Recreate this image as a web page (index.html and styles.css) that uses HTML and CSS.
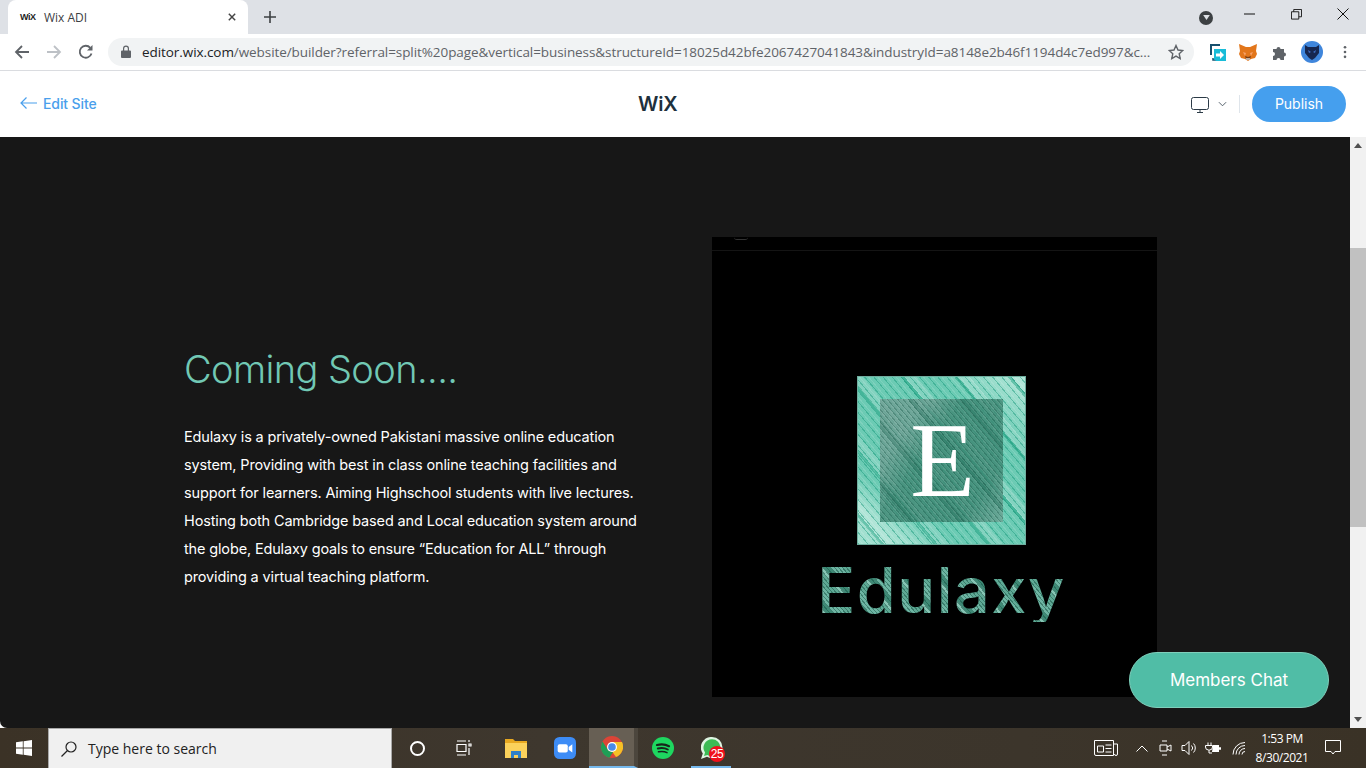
FILE: index.html
```html
<!DOCTYPE html>
<html lang="en">
<head>
<meta charset="utf-8">
<title>Wix ADI</title>
<link rel="stylesheet" href="styles.css">
</head>
<body>
<div class="tabstrip">
  <div class="tab">
    <span class="favicon">WiX</span>
    <span class="tab-title">Wix ADI</span>
    <svg class="tab-close" viewBox="0 0 10 10"><path d="M1 1l8 8M9 1l-8 8"/></svg>
  </div>
  <svg class="new-tab" viewBox="0 0 12 12"><path d="M6 0v12M0 6h12"/></svg>
  <div class="strip-right">
    <span class="profile-dot"><svg viewBox="0 0 8 6"><path d="M0 0h8L4 6z"/></svg></span>
    <svg class="win min" viewBox="0 0 12 12"><path d="M0 6h11"/></svg>
    <svg class="win restore" viewBox="0 0 12 12"><path d="M.5 3h8v8h-8zM3 3V.5h8.500v8H8.500"/></svg>
    <svg class="win close" viewBox="0 0 12 12"><path d="M.5.500l11 11M11.500.500l-11 11"/></svg>
  </div>
</div>
<div class="toolbar">
  <svg class="nav" viewBox="0 0 16 16"><path d="M15 8H2M8 2L2 8l6 6"/></svg>
  <svg class="nav off" viewBox="0 0 16 16"><path d="M1 8h13M8 2l6 6-6 6"/></svg>
  <svg class="nav reload" viewBox="0 0 16 16"><path d="M13.500 9.500A6 6 0 1 1 12.300 3.800"/><path class="solid" d="M14.500 1v5.500H9z"/></svg>
  <div class="omnibox">
    <svg class="lock" viewBox="0 0 10 13"><path d="M1 5.500h8a1 1 0 0 1 1 1V12a1 1 0 0 1-1 1H1a1 1 0 0 1-1-1V6.500a1 1 0 0 1 1-1zM2 5.500V3.500a3 3 0 0 1 6 0v2H6.800v-2a1.800 1.800 0 0 0-3.600 0v2z"/></svg>
    <span class="url"><b>editor.wix.com</b>/website/builder?referral=split%20page&amp;vertical=business&amp;structureId=18025d42bfe2067427041843&amp;industryId=a8148e2b46f1194d4c7ed997&amp;c...</span>
    <svg class="star" viewBox="0 0 16 16"><path d="M8 1.500l2 4.500 4.800.500-3.600 3.200 1 4.800L8 12.100l-4.200 2.400 1-4.800L1.200 6.500 6 6z"/></svg>
  </div>
  <div class="extensions">
    <svg class="ext ext-share" viewBox="0 0 18 18"><path fill="none" stroke="#17506e" stroke-width="2" d="M12 2H3v10"/><path fill="none" stroke="#17506e" stroke-width="1.500" d="M5 15v2h4"/><path fill="#19bcd8" d="M6 6h12v12H8l-2-2z"/><path fill="#fff" d="M8 10.500h4V8l4 4-4 4v-2.500H8z"/></svg>
    <svg class="ext ext-fox" viewBox="0 0 18 18"><path fill="#e2761b" d="M0 1l7 3h4l7-3-1 7 1 3-2 4-4 1-3 2-3-2-4-1-2-4 1-3z"/><path fill="#f6a26b" d="M4 9l3 1-1 3zM14 9l-3 1 1 3z"/><path fill="#763d16" d="M6 13l3 1 3-1-1 3H7z"/><path fill="#c0ad9e" d="M7 15h4v2H7z"/></svg>
    <svg class="ext ext-puzzle" viewBox="0 0 16 16"><path fill="#5f6368" d="M1 5h3.500a2 2 0 1 1 4 0H12v3.500a2 2 0 1 1 0 4V16H8.500a2 2 0 1 0-4 0H1v-4a2 2 0 1 0 0-4z"/></svg>
    <span class="avatar"><svg viewBox="0 0 14 16"><path fill="#16264f" d="M0 1l3 2h8l3-2v8l-4 5-3 2-3-2-4-5z"/><path fill="#3f6fc4" d="M3 6l3 2-2 1zM11 6L8 8l2 1z"/></svg></span>
    <svg class="kebab" viewBox="0 0 4 16"><circle cx="2" cy="2.500" r="1.500"/><circle cx="2" cy="8" r="1.500"/><circle cx="2" cy="13.500" r="1.500"/></svg>
  </div>
</div>
<header class="wixbar">
  <a class="edit-site"><svg viewBox="0 0 17 12"><path d="M17 6H1M6.500.500L1 6l5.500 5.500"/></svg>Edit Site</a>
  <div class="wix-logo">WiX</div>
  <div class="wix-actions">
    <svg class="monitor" viewBox="0 0 18 16"><rect x=".5" y=".5" width="17" height="12" rx="2"/><path d="M6 15.500h6M9 13v2"/></svg>
    <svg class="chev" viewBox="0 0 10 6"><path d="M1 1l4 4 4-4"/></svg>
    <span class="vsep"></span>
    <button class="publish">Publish</button>
  </div>
</header>
<main class="viewport">
  <div class="site">
    <section class="copy">
      <h1>Coming Soon....</h1>
      <p>Edulaxy is a privately-owned Pakistani massive online education<br>system, Providing with best in class online teaching facilities and<br>support for learners. Aiming Highschool students with live lectures.<br>Hosting both Cambridge based and Local education system around<br>the globe, Edulaxy goals to ensure “Education for ALL” through<br>providing a virtual teaching platform.</p>
    </section>
    <figure class="art">
      <div class="art-mark"></div>
      <div class="art-line"></div>
      <div class="logo-square"><div class="logo-inner"><span class="logo-e">E</span></div></div>
      <div class="logo-word">Edulaxy</div>
    </figure>
  </div>
  <div class="scrollbar">
    <svg class="sb-arrow" viewBox="0 0 8 5"><path d="M4 0l4 5H0z"/></svg>
    <div class="sb-track"><div class="sb-thumb"></div></div>
    <svg class="sb-arrow" viewBox="0 0 8 5"><path d="M0 0h8L4 5z"/></svg>
  </div>
  <button class="chat">Members Chat</button>
</main>
<footer class="taskbar">
  <div class="start"><svg viewBox="0 0 16 16"><path d="M0 2.300l6.800-1v6.300H0zM7.600 1.200L16 0v7.600H7.600zM0 8.400h6.800v6.300l-6.800-1zM7.600 8.400H16V16l-8.400-1.200z"/></svg></div>
  <div class="searchbox">
    <svg viewBox="0 0 16 16"><circle cx="10" cy="6" r="5"/><path d="M6.500 9.500L.5 15.500"/></svg>
    <span>Type here to search</span>
  </div>
  <div class="tray-apps">
    <span class="tb-item"><span class="cortana"></span></span>
    <span class="tb-item"><svg class="taskview" viewBox="0 0 16 16"><path d="M1 1h9M1 15h9M1 4.500h9v7H1zM13 4h2v2h-2zM13 8v7M13 0v2"/></svg></span>
    <span class="tb-item"><svg viewBox="0 0 22 20"><path fill="#e8a820" d="M0 1h8l2 2h12v3H0z"/><path fill="#fbd15b" d="M0 5h22v15H0z"/><path fill="#2f80c8" d="M6 20v-7h10v7h-3v-3H9v3z"/></svg></span>
    <span class="tb-item"><svg viewBox="0 0 24 24"><rect width="24" height="24" rx="6" fill="#3d8cf6"/><rect x="4" y="8" width="11" height="9" rx="2" fill="#fff"/><path fill="#fff" d="M16 11l4-3v9l-4-3z"/></svg></span>
    <span class="tb-item active"><svg viewBox="0 0 22 22"><circle cx="11" cy="11" r="11" fill="#dc4437"/><path fill="#f6c026" d="M11 6h10a11 11 0 0 1-6 15l-5-7z"/><path fill="#1e9e56" d="M1.500 5.500L7 14l5 2-3.500 5.800A11 11 0 0 1 1.500 5.500z"/><circle cx="11" cy="11" r="5" fill="#fff"/><circle cx="11" cy="11" r="3.800" fill="#4a8ae8"/></svg></span>
    <span class="tb-item"><svg viewBox="0 0 22 22"><circle cx="11" cy="11" r="11" fill="#1ed760"/><path fill="none" stroke="#17251b" stroke-linecap="round" stroke-width="2.200" d="M5 8c4-1 8-1 12 1.200"/><path fill="none" stroke="#17251b" stroke-linecap="round" stroke-width="1.900" d="M5.800 11.500c3.500-.8 7-.6 10 1"/><path fill="none" stroke="#17251b" stroke-linecap="round" stroke-width="1.600" d="M6.500 14.800c3-.6 6-.5 8.500.8"/></svg></span>
    <span class="tb-item running"><svg viewBox="0 0 22 22"><path fill="#dff5e3" d="M11 0a10.500 10.500 0 0 1 0 21c-2 0-3.500-.4-5-1.300L0 22l1.800-5.500A10.500 10.500 0 0 1 11 0z"/><path fill="#3dbb55" d="M11 2.200a8.500 8.500 0 0 1 0 17c-1.800 0-3.200-.5-4.500-1.300l-3.500 1 1-3.400A8.500 8.500 0 0 1 11 2.200z"/></svg><span class="badge">25</span></span>
  </div>
  <div class="tray">
    <svg class="news" viewBox="0 0 24 16"><path d="M.5.500h19v15H2a1.500 1.500 0 0 1-1.500-1.500zM19.500 4h4v10a1.500 1.500 0 0 1-3 0M3.500 6h6v6h-6zM11.500 5h6M11.500 8.500h6M11.500 12h6"/></svg>
    <svg class="t-ic caret" viewBox="0 0 12 7"><path d="M.5 6.500L6 1l5.500 5.500"/></svg>
    <svg class="t-ic cam" viewBox="0 0 14 16"><path d="M3 1h5M3 15h5M1 5h7v6H1zM8 7l4-2v6l-4-2"/></svg>
    <svg class="t-ic vol" viewBox="0 0 16 16"><path d="M1 5.500h3L8 1.500v13l-4-4H1zM10.500 5.500a3.500 3.500 0 0 1 0 5M12.500 3.500a6.500 6.500 0 0 1 0 9"/></svg>
    <svg class="t-ic batt" viewBox="0 0 16 12"><path d="M3 .5v3M6 .5v3M.5 3.500h7V5a3 3 0 0 1-3 3H3.500A3 3 0 0 1 .5 5zM4 8v3h3"/><path class="fill" d="M8 3h6v7H7z"/><path d="M14.500 5.500h1v2h-1z"/></svg>
    <svg class="t-ic wifi" viewBox="0 0 16 14"><path d="M1 13.500A12 12 0 0 1 13 1.500M4 13.500a9 9 0 0 1 9-9M7 13.500a6 6 0 0 1 6-6M10 13.500a3 3 0 0 1 3-3"/></svg>
    <div class="clock"><span>1:53 PM</span><span>8/30/2021</span></div>
    <svg class="notify" viewBox="0 0 16 16"><path d="M.5.500h15v11H10L8 14l-2-2.500H.5z"/></svg>
  </div>
</footer>
</body>
</html>
```
FILE: styles.css
```css
* { box-sizing: border-box; }
html, body { margin: 0; height: 100%; overflow: hidden; }
body { display: flex; flex-direction: column; height: 768px; background: #fff; font-family: "Open Sans", "Liberation Sans", sans-serif; }

/* browser tab strip */
.tabstrip { height: 34px; flex: none; background: #dee1e6; display: flex; align-items: flex-end; padding-left: 8px; }
.tab { width: 240px; height: 34px; background: #fff; border-radius: 8px 8px 0 0; display: flex; align-items: center; padding: 0 12px 0 12px; }
.favicon { width: 16px; font: 700 9px "Liberation Sans", sans-serif; color: #222; letter-spacing: -.4px; margin-right: 8px; }
.tab-title { flex: 1; font-size: 12px; color: #3c4043; }
.tab-close { width: 8px; height: 8px; fill: none; stroke: #444; stroke-width: 1.800; }
.new-tab { width: 12px; height: 12px; margin: 0 0 11px 16px; fill: none; stroke: #3c4043; stroke-width: 1.600; }
.strip-right { margin-left: auto; height: 34px; display: flex; align-items: center; padding-right: 17px; }
.profile-dot { width: 14px; height: 14px; border-radius: 50%; background: #3c4043; display: flex; align-items: center; justify-content: center; margin-right: 31px; margin-top: 1px; }
.profile-dot svg { width: 7px; height: 5px; fill: #dee1e6; }
.win { width: 12px; height: 12px; fill: none; stroke: #111; stroke-width: 1; margin-top: -6px; }
.min { margin-right: 35px; }
.restore { width: 11px; height: 11px; margin-right: 35px; }

/* toolbar */
.toolbar { height: 37px; flex: none; background: #fff; border-bottom: 1px solid #dadce0; display: flex; align-items: center; padding: 0 0 1px 14px; }
.nav { width: 16px; height: 16px; fill: none; stroke: #5f6368; stroke-width: 1.800; margin-right: 16px; }
.nav.off { stroke: #bdc1c6; }
.nav.reload { margin-right: 14px; }
.solid { fill: #5f6368; stroke: none; }
.omnibox { width: 1086px; height: 28px; background: #f1f3f4; border-radius: 14px; display: flex; align-items: center; padding-left: 13px; }
.lock { width: 10px; height: 13px; fill: #5f6368; margin-right: 11px; flex: none; }
.url { font-size: 13.500px; letter-spacing: -.072px; color: #5f6368; white-space: nowrap; }
.url b { font-weight: 400; color: #202124; }
.star { width: 16px; height: 16px; fill: none; stroke: #5f6368; stroke-width: 1.400; margin-left: auto; margin-right: 10px; flex: none; }
.extensions { display: flex; align-items: center; margin-left: 14px; }
.ext { width: 18px; height: 18px; flex: none; }
.ext-share { margin-right: 13px; }
.ext-fox { margin-right: 15px; }
.ext-puzzle { width: 16px; height: 16px; margin-right: 13px; }
.avatar { width: 22px; height: 22px; border-radius: 50%; background: #3f86dc; display: flex; align-items: center; justify-content: center; }
.avatar svg { width: 14px; height: 16px; }
.kebab { width: 4px; height: 14px; fill: #5f6368; margin-left: 20px; }

/* wix preview bar */
.wixbar { height: 66px; flex: none; background: #fff; display: flex; align-items: center; justify-content: space-between; position: relative; padding: 0 20px; }
.edit-site { display: flex; align-items: center; color: #4a9fec; font: 500 14px "Inter", "Liberation Sans", sans-serif; letter-spacing: -.1px; margin-bottom: 2px; }
.edit-site svg { width: 17px; height: 12px; fill: none; stroke: #4a9fec; stroke-width: 1.200; margin-right: 6px; }
.wix-logo { position: absolute; left: 638px; top: 21px; font: 600 20px "Inter", "Liberation Sans", sans-serif; color: #20303c; letter-spacing: -.2px; }
.wix-actions { display: flex; align-items: center; }
.monitor { width: 18px; height: 16px; fill: none; stroke: #2b3a46; stroke-width: 1; margin-top: 2px; }
.chev { width: 9px; height: 6px; fill: none; stroke: #44525d; stroke-width: 1; margin-left: 9px; }
.vsep { width: 1px; height: 18px; background: #dfe5eb; margin: 0 12px 0 12px; }
.publish { width: 94px; height: 36px; border: 0; border-radius: 18px; background: #459fee; color: #fff; font: 400 14px "Inter", "Liberation Sans", sans-serif; padding: 0 0 2px; }

/* page */
.viewport { flex: 1; position: relative; display: flex; background: #fff; min-height: 0; }
.site { flex: 1; background: #171717; border-bottom-left-radius: 7px; display: grid; grid-template-columns: 528px 445px; padding: 100px 0 0 184px; align-content: start; }
.copy { padding-top: 108px; }
.copy h1 { margin: 0; font: 300 38px/48px "Inter", sans-serif; color: #71c8b4; letter-spacing: -.6px; }
.copy p { margin: 30px 0 0; font: 400 14.500px/28px "Inter", sans-serif; color: #fff; white-space: nowrap; letter-spacing: -.15px; }
.art { margin: 0; height: 460px; background: #000; display: flex; flex-direction: column; align-items: center; position: relative; padding: 139px 0 0 14px; }
.art-line { position: absolute; left: 0; right: 0; top: 13px; height: 1px; background: #141414; }
.art-mark { position: absolute; left: 22px; top: 0; width: 14px; height: 3px; border-bottom: 1px solid #333; border-radius: 0 0 7px 7px; }
.logo-square { width: 169px; height: 169px; flex: none; display: flex; align-items: center; justify-content: center; border: 1px solid #6fae9f;
  background:
    repeating-linear-gradient(50deg, rgba(20,150,120,.45) 0 1px, transparent 1px 3px, rgba(255,255,255,.12) 3px 4px, transparent 4px 7px),
    repeating-linear-gradient(50deg, transparent 0 17px, rgba(10,150,115,.4) 17px 20px, rgba(255,255,255,.16) 20px 29px, transparent 29px 41px),
    linear-gradient(40deg, #a2e0d0 0 14%, #6ccbb4 24% 76%, #a2e0d0 92%); }
.logo-inner { width: 123px; height: 123px; display: flex; align-items: center; justify-content: center;
  background:
    repeating-linear-gradient(50deg, rgba(20,80,65,.3) 0 1px, transparent 1px 3px, rgba(255,255,255,.08) 3px 4px),
    repeating-linear-gradient(50deg, transparent 0 22px, rgba(15,90,70,.25) 22px 27px, transparent 27px 39px),
    linear-gradient(125deg, rgba(110,160,148,.85) 0 22%, rgba(62,135,115,.82) 40% 80%, rgba(110,165,150,.85) 100%); }
.logo-e { font: 400 106px/1 "Liberation Serif", serif; color: #fff; margin: 0 0 0 2px; }
.logo-word { font: 500 63px/1 "Inter", sans-serif; letter-spacing: 1.500px; margin: 14px 0 0; color: transparent;
  background:
    repeating-linear-gradient(50deg, rgba(20,80,65,.5) 0 1px, transparent 1px 3px),
    repeating-linear-gradient(50deg, #5fa995 0 9px, #86c5b4 9px 13px, #3f8a76 13px 18px, #6eb5a3 18px 27px);
  -webkit-background-clip: text; background-clip: text; }
.scrollbar { width: 16px; flex: none; background: #f1f1f1; display: flex; flex-direction: column; align-items: center; }
.sb-arrow { width: 8px; height: 5px; flex: none; fill: #505050; margin: 6px 0; }
.sb-track { flex: 1; width: 100%; padding-top: 94px; }
.sb-thumb { height: 279px; background: #c1c1c1; }
.chat { position: absolute; left: 1129px; top: 515px; width: 200px; height: 56px; border-radius: 28px; border: 1px solid #7fcfbb; background: #50bda6; color: #fff; font: 400 17px "Inter", sans-serif; letter-spacing: 0; padding: 0; }

/* taskbar */
.taskbar { height: 40px; flex: none; display: flex; align-items: center; background: linear-gradient(90deg, #3b3226, #3e372e 40%, #3c352b 75%, #3a3226); color: #fff; }
.start { width: 48px; height: 40px; display: flex; align-items: center; justify-content: center; }
.start svg { width: 16px; height: 16px; fill: #fff; }
.searchbox { width: 344px; height: 40px; background: #f0f0f0; border: 1px solid #a9a9a9; border-width: 1px 1px 0; display: flex; align-items: center; padding-left: 12px; color: #222; font-size: 14px; }
.searchbox svg { width: 16px; height: 16px; fill: none; stroke: #222; stroke-width: 1.200; margin-right: 11px; }
.tray-apps { display: flex; height: 40px; margin-left: 1px; }
.tb-item { width: 49px; height: 40px; display: flex; align-items: center; justify-content: center; position: relative; }
.tb-item svg { width: 22px; height: 22px; }
.tb-item svg.taskview { width: 16px; height: 16px; fill: none; stroke: #fff; stroke-width: 1.200; margin-right: 6px; }
.cortana { width: 15px; height: 15px; border: 2px solid #fff; border-radius: 50%; }
.tb-item.active { background: #675f54; border-bottom: 2px solid #76b9ed; border-right: 4px solid #4c463d; }
.tb-item.active svg { margin-left: 0; }
.tb-item.running::after { content: ""; position: absolute; left: 4px; right: 5px; bottom: 0; height: 2px; background: #76b9ed; }
.badge { position: absolute; left: 22px; top: 18px; width: 16px; height: 16px; border-radius: 50%; background: #f0101c; color: #fff; font: 400 12px/16px "Liberation Sans", sans-serif; text-align: center; letter-spacing: -.3px; }
.tray { margin-left: auto; display: flex; align-items: center; height: 40px; }
.news { width: 24px; height: 16px; fill: none; stroke: #fff; stroke-width: 1; margin-right: 18px; }
.t-ic { fill: none; stroke: #fff; stroke-width: 1; flex: none; }
.caret { width: 12px; height: 7px; margin-right: 11px; }
.cam { width: 14px; height: 16px; margin-right: 8px; }
.vol { width: 16px; height: 16px; margin-right: 8px; }
.batt { width: 16px; height: 12px; margin-right: 11px; }
.batt .fill { fill: #fff; stroke: none; }
.wifi { width: 16px; height: 14px; margin-right: 4px; }
.clock { display: flex; flex-direction: column; align-items: center; width: 60px; font-size: 12px; line-height: 19px; margin-right: 13px; letter-spacing: -.45px; }
.notify { width: 16px; height: 16px; fill: none; stroke: #fff; stroke-width: 1; margin-right: 25px; }
```
